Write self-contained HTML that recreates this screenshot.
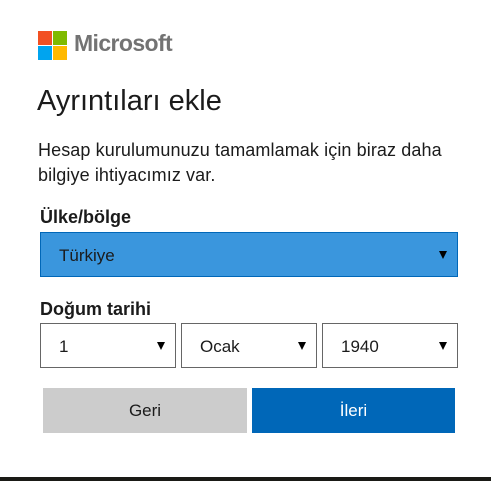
<!DOCTYPE html>
<html><head><meta charset="utf-8"><style>
*{margin:0;padding:0;box-sizing:border-box}
body{width:491px;height:481px;background:#fff;position:relative;overflow:hidden;font-family:"Liberation Sans",sans-serif;color:#1b1b1b}
.a{position:absolute;white-space:nowrap}
.sq{position:absolute;width:14px;height:14px}
.sel{position:absolute;border:1px solid #666;height:45px;font-size:17px;line-height:45px;padding-left:18px}
.sel:after{content:"";position:absolute;right:10px;top:18px;border-left:4px solid transparent;border-right:4px solid transparent;border-top:8px solid #000}
.btn{position:absolute;top:388px;height:45px;font-size:17px;line-height:45px;text-align:center}
</style></head><body>
<div class="sq" style="left:38px;top:31px;background:#f25022"></div>
<div class="sq" style="left:53px;top:31px;background:#7fba00"></div>
<div class="sq" style="left:38px;top:46px;background:#00a4ef"></div>
<div class="sq" style="left:53px;top:46px;background:#ffb900"></div>
<div class="a" style="left:74px;top:30px;font-size:23px;font-weight:bold;color:#737373;letter-spacing:-0.6px">Microsoft</div>
<div class="a" style="left:37px;top:85px;font-size:29px;color:#1b1b1b">Ayrıntıları ekle</div>
<div class="a" style="left:38px;top:138px;font-size:18px;line-height:25px;letter-spacing:0.1px">Hesap kurulumunuzu tamamlamak için biraz daha<br>bilgiye ihtiyacımız var.</div>
<div class="a" style="left:40px;top:207px;font-size:18px;font-weight:bold">Ülke/bölge</div>
<div class="sel" style="left:40px;top:232px;width:418px;background:#3a96dd;border:1px solid #0067b8">Türkiye</div>
<div class="a" style="left:40px;top:299px;font-size:18px;font-weight:bold">Doğum tarihi</div>
<div class="sel" style="left:40px;top:323px;width:136px">1</div>
<div class="sel" style="left:181px;top:323px;width:136px">Ocak</div>
<div class="sel" style="left:322px;top:323px;width:136px">1940</div>
<div class="btn" style="left:43px;width:204px;background:#cccccc">Geri</div>
<div class="btn" style="left:252px;width:203px;background:#0067b8;color:#fff">İleri</div>
<div style="position:absolute;left:0;top:477px;width:491px;height:4px;background:#1a1a16"></div>
</body></html>
